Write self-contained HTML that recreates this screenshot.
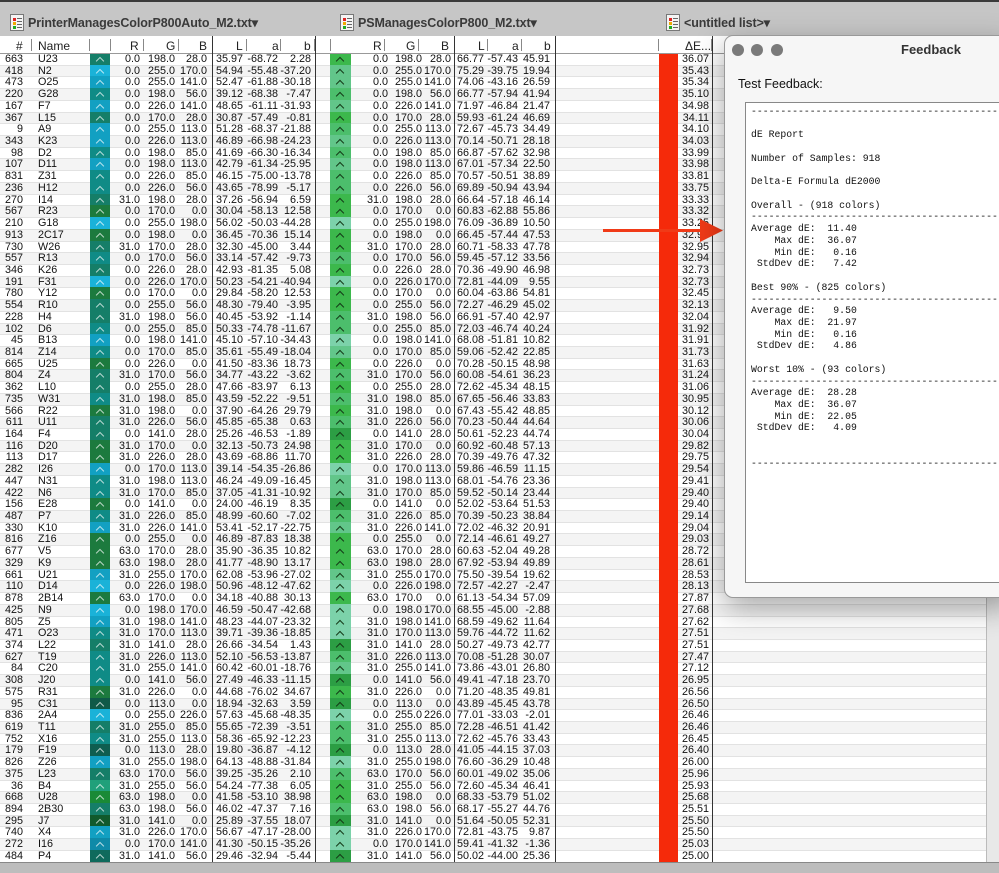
<!DOCTYPE html>
<html><head><meta charset="utf-8"><style>
*{margin:0;padding:0;box-sizing:border-box}
body{width:999px;height:873px;overflow:hidden;background:#c3c3c3;font-family:"Liberation Sans",sans-serif;position:relative;color:#111}
.top{position:absolute;left:0;top:0;width:999px;height:36px;background:#c6c6c6;border-top:2px solid #3a3a3a}
.tab{position:absolute;top:13px;font-size:12.5px;color:#3a3a3a;font-weight:bold;letter-spacing:-0.1px}
.ic{position:absolute;top:12px;width:14px;height:17px;background:#f4f4f4;border:1px solid #777}
.ic:before{content:"";position:absolute;left:2px;top:3px;width:3px;height:3px;background:#d22;box-shadow:0 4px 0 #ea0,0 8px 0 #2a2}
.ic:after{content:"";position:absolute;left:6px;top:3px;width:5px;height:1px;background:#666;box-shadow:0 3px 0 #666,0 6px 0 #666,0 9px 0 #666}
.hdr{position:absolute;left:0;top:36px;width:986px;height:18px;background:#fff;border-bottom:1px solid #999;font-size:12px;color:#222}
.hdr span{position:absolute;top:3px}
.tk{position:absolute;top:3px;width:1px;height:12px;background:#888}
.tbl{position:absolute;left:0;top:54px;width:986px;height:808px;overflow:hidden;background:#fff}
.r{position:relative;height:11.72px;border-bottom:1px solid #e2e2e2;font-size:10.8px;line-height:11px}
.r:nth-child(even){background:#f4f4f4}
.r b{position:absolute;top:0;font-weight:normal;text-align:right;white-space:nowrap}
.n{left:0;width:23px}.m{left:38px;text-align:left!important}
.c1{left:110px;width:30px}.c2{left:140px;width:35px}.c3{left:174px;width:33px}
.c4{left:212px;width:31px}.c5{left:244px;width:34px}.c6{left:278px;width:33px}
.d1{left:351px;width:37px}.d2{left:388px;width:34px}.d3{left:421px;width:30px}
.d4{left:455px;width:29px}.d5{left:484px;width:34px}.d6{left:518px;width:32px}
.e{left:678px;width:31px}
.r i{position:absolute;top:-1px;height:12.7px}
.r i:after{content:"";position:absolute;left:7px;top:5px;width:5px;height:5px;border-left:1px solid;border-top:1px solid;transform:rotate(45deg)}
.s1{left:90px;width:20px;color:rgba(255,255,255,.7)}
.s2{left:330px;width:21px;color:#153a18}
.k1{background:#1c7a3e}.k2{background:#157e68}.k3{background:#0f8b86}.k4{background:#12a0c2}.k5{background:#1ab2d8}
.g1{background:#3cb84c}.g2{background:#4cbe6c}.g3{background:#62c68a}.g4{background:#7cd2aa}.gd{background:#2c9e44}
.vl{position:absolute;top:36px;width:1px;height:826px;background:#333}
.red{position:absolute;left:659px;top:54px;width:19px;height:808px;background:#f52a0a}
.bot{position:absolute;left:0;top:862px;width:999px;height:11px;background:#bdbdbd;border-top:1px solid #888}
.rgt{position:absolute;left:986px;top:36px;width:13px;height:826px;background:#e8e8e8;border-left:1px solid #bbb}
.fb{position:absolute;left:724px;top:35px;width:290px;height:563px;background:#f6f6f6;border:1px solid #999;border-radius:9px;box-shadow:0 10px 30px rgba(0,0,0,.35)}
.dot{position:absolute;top:8px;width:12px;height:12px;border-radius:50%;background:#7a7a7a}
.ft{position:absolute;left:176px;top:6px;font-size:13px;font-weight:bold;color:#333}
.tf{position:absolute;left:13px;top:41px;font-size:12.5px;color:#111}
.box{position:absolute;left:20px;top:66px;width:270px;height:481px;background:#fff;border:1px solid #888;overflow:hidden}
.box pre{position:absolute;left:5px;top:3px;font-family:"Liberation Mono",monospace;font-size:9.8px;line-height:11.72px;color:#111}
</style></head><body>
<div class="top">
<div class="ic" style="left:10px"></div><div class="tab" style="left:28px">PrinterManagesColorP800Auto_M2.txt▾</div>
<div class="ic" style="left:340px"></div><div class="tab" style="left:358px">PSManagesColorP800_M2.txt▾</div>
<div class="ic" style="left:666px"></div><div class="tab" style="left:684px">&lt;untitled list&gt;▾</div>
</div>
<div class="hdr">
<span style="left:16px">#</span><div class="tk" style="left:31px"></div>
<span style="left:38px">Name</span><div class="tk" style="left:89px"></div><div class="tk" style="left:110px"></div>
<span style="left:130px">R</span><div class="tk" style="left:143px"></div>
<span style="left:166px">G</span><div class="tk" style="left:178px"></div>
<span style="left:199px">B</span>
<span style="left:236px">L</span><div class="tk" style="left:246px"></div>
<span style="left:272px">a</span><div class="tk" style="left:280px"></div>
<span style="left:304px">b</span><div class="tk" style="left:314px"></div><div class="tk" style="left:330px"></div>
<span style="left:373px">R</span><div class="tk" style="left:384px"></div>
<span style="left:406px">G</span><div class="tk" style="left:418px"></div>
<span style="left:441px">B</span>
<span style="left:478px">L</span><div class="tk" style="left:487px"></div>
<span style="left:512px">a</span><div class="tk" style="left:521px"></div>
<span style="left:544px">b</span>
<div class="tk" style="left:658px"></div><span style="left:685px">ΔE...</span><div class="tk" style="left:711px"></div>
</div>
<div class="tbl">
<div class="r"><b class="n">663</b><b class="m">U23</b><i class="s1 k2"></i><b class="c1">0.0</b><b class="c2">198.0</b><b class="c3">28.0</b><b class="c4">35.97</b><b class="c5">-68.72</b><b class="c6">2.28</b><i class="s2 g1"></i><b class="d1">0.0</b><b class="d2">198.0</b><b class="d3">28.0</b><b class="d4">66.77</b><b class="d5">-57.43</b><b class="d6">45.91</b><b class="e">36.07</b></div>
<div class="r"><b class="n">418</b><b class="m">N2</b><i class="s1 k5"></i><b class="c1">0.0</b><b class="c2">255.0</b><b class="c3">170.0</b><b class="c4">54.94</b><b class="c5">-55.48</b><b class="c6">-37.20</b><i class="s2 g3"></i><b class="d1">0.0</b><b class="d2">255.0</b><b class="d3">170.0</b><b class="d4">75.29</b><b class="d5">-39.75</b><b class="d6">19.94</b><b class="e">35.43</b></div>
<div class="r"><b class="n">473</b><b class="m">O25</b><i class="s1 k4"></i><b class="c1">0.0</b><b class="c2">255.0</b><b class="c3">141.0</b><b class="c4">52.47</b><b class="c5">-61.88</b><b class="c6">-30.18</b><i class="s2 g3"></i><b class="d1">0.0</b><b class="d2">255.0</b><b class="d3">141.0</b><b class="d4">74.06</b><b class="d5">-43.16</b><b class="d6">26.59</b><b class="e">35.34</b></div>
<div class="r"><b class="n">220</b><b class="m">G28</b><i class="s1 k3"></i><b class="c1">0.0</b><b class="c2">198.0</b><b class="c3">56.0</b><b class="c4">39.12</b><b class="c5">-68.38</b><b class="c6">-7.47</b><i class="s2 g2"></i><b class="d1">0.0</b><b class="d2">198.0</b><b class="d3">56.0</b><b class="d4">66.77</b><b class="d5">-57.94</b><b class="d6">41.94</b><b class="e">35.10</b></div>
<div class="r"><b class="n">167</b><b class="m">F7</b><i class="s1 k4"></i><b class="c1">0.0</b><b class="c2">226.0</b><b class="c3">141.0</b><b class="c4">48.65</b><b class="c5">-61.11</b><b class="c6">-31.93</b><i class="s2 g3"></i><b class="d1">0.0</b><b class="d2">226.0</b><b class="d3">141.0</b><b class="d4">71.97</b><b class="d5">-46.84</b><b class="d6">21.47</b><b class="e">34.98</b></div>
<div class="r"><b class="n">367</b><b class="m">L15</b><i class="s1 k2"></i><b class="c1">0.0</b><b class="c2">170.0</b><b class="c3">28.0</b><b class="c4">30.87</b><b class="c5">-57.49</b><b class="c6">-0.81</b><i class="s2 g1"></i><b class="d1">0.0</b><b class="d2">170.0</b><b class="d3">28.0</b><b class="d4">59.93</b><b class="d5">-61.24</b><b class="d6">46.69</b><b class="e">34.11</b></div>
<div class="r"><b class="n">9</b><b class="m">A9</b><i class="s1 k4"></i><b class="c1">0.0</b><b class="c2">255.0</b><b class="c3">113.0</b><b class="c4">51.28</b><b class="c5">-68.37</b><b class="c6">-21.88</b><i class="s2 g2"></i><b class="d1">0.0</b><b class="d2">255.0</b><b class="d3">113.0</b><b class="d4">72.67</b><b class="d5">-45.73</b><b class="d6">34.49</b><b class="e">34.10</b></div>
<div class="r"><b class="n">343</b><b class="m">K23</b><i class="s1 k4"></i><b class="c1">0.0</b><b class="c2">226.0</b><b class="c3">113.0</b><b class="c4">46.89</b><b class="c5">-66.98</b><b class="c6">-24.23</b><i class="s2 g3"></i><b class="d1">0.0</b><b class="d2">226.0</b><b class="d3">113.0</b><b class="d4">70.14</b><b class="d5">-50.71</b><b class="d6">28.18</b><b class="e">34.03</b></div>
<div class="r"><b class="n">98</b><b class="m">D2</b><i class="s1 k3"></i><b class="c1">0.0</b><b class="c2">198.0</b><b class="c3">85.0</b><b class="c4">41.69</b><b class="c5">-66.30</b><b class="c6">-16.34</b><i class="s2 g2"></i><b class="d1">0.0</b><b class="d2">198.0</b><b class="d3">85.0</b><b class="d4">66.87</b><b class="d5">-57.62</b><b class="d6">32.98</b><b class="e">33.99</b></div>
<div class="r"><b class="n">107</b><b class="m">D11</b><i class="s1 k4"></i><b class="c1">0.0</b><b class="c2">198.0</b><b class="c3">113.0</b><b class="c4">42.79</b><b class="c5">-61.34</b><b class="c6">-25.95</b><i class="s2 g3"></i><b class="d1">0.0</b><b class="d2">198.0</b><b class="d3">113.0</b><b class="d4">67.01</b><b class="d5">-57.34</b><b class="d6">22.50</b><b class="e">33.98</b></div>
<div class="r"><b class="n">831</b><b class="m">Z31</b><i class="s1 k3"></i><b class="c1">0.0</b><b class="c2">226.0</b><b class="c3">85.0</b><b class="c4">46.15</b><b class="c5">-75.00</b><b class="c6">-13.78</b><i class="s2 g2"></i><b class="d1">0.0</b><b class="d2">226.0</b><b class="d3">85.0</b><b class="d4">70.57</b><b class="d5">-50.51</b><b class="d6">38.89</b><b class="e">33.81</b></div>
<div class="r"><b class="n">236</b><b class="m">H12</b><i class="s1 k3"></i><b class="c1">0.0</b><b class="c2">226.0</b><b class="c3">56.0</b><b class="c4">43.65</b><b class="c5">-78.99</b><b class="c6">-5.17</b><i class="s2 g2"></i><b class="d1">0.0</b><b class="d2">226.0</b><b class="d3">56.0</b><b class="d4">69.89</b><b class="d5">-50.94</b><b class="d6">43.94</b><b class="e">33.75</b></div>
<div class="r"><b class="n">270</b><b class="m">I14</b><i class="s1 k2"></i><b class="c1">31.0</b><b class="c2">198.0</b><b class="c3">28.0</b><b class="c4">37.26</b><b class="c5">-56.94</b><b class="c6">6.59</b><i class="s2 g1"></i><b class="d1">31.0</b><b class="d2">198.0</b><b class="d3">28.0</b><b class="d4">66.64</b><b class="d5">-57.18</b><b class="d6">46.14</b><b class="e">33.33</b></div>
<div class="r"><b class="n">567</b><b class="m">R23</b><i class="s1 k1"></i><b class="c1">0.0</b><b class="c2">170.0</b><b class="c3">0.0</b><b class="c4">30.04</b><b class="c5">-58.13</b><b class="c6">12.58</b><i class="s2 g1"></i><b class="d1">0.0</b><b class="d2">170.0</b><b class="d3">0.0</b><b class="d4">60.83</b><b class="d5">-62.88</b><b class="d6">55.86</b><b class="e">33.32</b></div>
<div class="r"><b class="n">210</b><b class="m">G18</b><i class="s1 k5"></i><b class="c1">0.0</b><b class="c2">255.0</b><b class="c3">198.0</b><b class="c4">56.02</b><b class="c5">-50.03</b><b class="c6">-44.28</b><i class="s2 g4"></i><b class="d1">0.0</b><b class="d2">255.0</b><b class="d3">198.0</b><b class="d4">76.09</b><b class="d5">-36.89</b><b class="d6">10.50</b><b class="e">33.25</b></div>
<div class="r"><b class="n">913</b><b class="m">2C17</b><i class="s1 k1"></i><b class="c1">0.0</b><b class="c2">198.0</b><b class="c3">0.0</b><b class="c4">36.45</b><b class="c5">-70.36</b><b class="c6">15.14</b><i class="s2 g1"></i><b class="d1">0.0</b><b class="d2">198.0</b><b class="d3">0.0</b><b class="d4">66.45</b><b class="d5">-57.44</b><b class="d6">47.53</b><b class="e">32.96</b></div>
<div class="r"><b class="n">730</b><b class="m">W26</b><i class="s1 k2"></i><b class="c1">31.0</b><b class="c2">170.0</b><b class="c3">28.0</b><b class="c4">32.30</b><b class="c5">-45.00</b><b class="c6">3.44</b><i class="s2 g1"></i><b class="d1">31.0</b><b class="d2">170.0</b><b class="d3">28.0</b><b class="d4">60.71</b><b class="d5">-58.33</b><b class="d6">47.78</b><b class="e">32.95</b></div>
<div class="r"><b class="n">557</b><b class="m">R13</b><i class="s1 k3"></i><b class="c1">0.0</b><b class="c2">170.0</b><b class="c3">56.0</b><b class="c4">33.14</b><b class="c5">-57.42</b><b class="c6">-9.73</b><i class="s2 g2"></i><b class="d1">0.0</b><b class="d2">170.0</b><b class="d3">56.0</b><b class="d4">59.45</b><b class="d5">-57.12</b><b class="d6">33.56</b><b class="e">32.94</b></div>
<div class="r"><b class="n">346</b><b class="m">K26</b><i class="s1 k2"></i><b class="c1">0.0</b><b class="c2">226.0</b><b class="c3">28.0</b><b class="c4">42.93</b><b class="c5">-81.35</b><b class="c6">5.08</b><i class="s2 g1"></i><b class="d1">0.0</b><b class="d2">226.0</b><b class="d3">28.0</b><b class="d4">70.36</b><b class="d5">-49.90</b><b class="d6">46.98</b><b class="e">32.73</b></div>
<div class="r"><b class="n">191</b><b class="m">F31</b><i class="s1 k5"></i><b class="c1">0.0</b><b class="c2">226.0</b><b class="c3">170.0</b><b class="c4">50.23</b><b class="c5">-54.21</b><b class="c6">-40.94</b><i class="s2 g4"></i><b class="d1">0.0</b><b class="d2">226.0</b><b class="d3">170.0</b><b class="d4">72.81</b><b class="d5">-44.09</b><b class="d6">9.55</b><b class="e">32.73</b></div>
<div class="r"><b class="n">780</b><b class="m">Y12</b><i class="s1 k1"></i><b class="c1">0.0</b><b class="c2">170.0</b><b class="c3">0.0</b><b class="c4">29.84</b><b class="c5">-58.20</b><b class="c6">12.53</b><i class="s2 g1"></i><b class="d1">0.0</b><b class="d2">170.0</b><b class="d3">0.0</b><b class="d4">60.04</b><b class="d5">-63.86</b><b class="d6">54.81</b><b class="e">32.45</b></div>
<div class="r"><b class="n">554</b><b class="m">R10</b><i class="s1 k2"></i><b class="c1">0.0</b><b class="c2">255.0</b><b class="c3">56.0</b><b class="c4">48.30</b><b class="c5">-79.40</b><b class="c6">-3.95</b><i class="s2 g1"></i><b class="d1">0.0</b><b class="d2">255.0</b><b class="d3">56.0</b><b class="d4">72.27</b><b class="d5">-46.29</b><b class="d6">45.02</b><b class="e">32.13</b></div>
<div class="r"><b class="n">228</b><b class="m">H4</b><i class="s1 k2"></i><b class="c1">31.0</b><b class="c2">198.0</b><b class="c3">56.0</b><b class="c4">40.45</b><b class="c5">-53.92</b><b class="c6">-1.14</b><i class="s2 g2"></i><b class="d1">31.0</b><b class="d2">198.0</b><b class="d3">56.0</b><b class="d4">66.91</b><b class="d5">-57.40</b><b class="d6">42.97</b><b class="e">32.04</b></div>
<div class="r"><b class="n">102</b><b class="m">D6</b><i class="s1 k3"></i><b class="c1">0.0</b><b class="c2">255.0</b><b class="c3">85.0</b><b class="c4">50.33</b><b class="c5">-74.78</b><b class="c6">-11.67</b><i class="s2 g2"></i><b class="d1">0.0</b><b class="d2">255.0</b><b class="d3">85.0</b><b class="d4">72.03</b><b class="d5">-46.74</b><b class="d6">40.24</b><b class="e">31.92</b></div>
<div class="r"><b class="n">45</b><b class="m">B13</b><i class="s1 k4"></i><b class="c1">0.0</b><b class="c2">198.0</b><b class="c3">141.0</b><b class="c4">45.10</b><b class="c5">-57.10</b><b class="c6">-34.43</b><i class="s2 g4"></i><b class="d1">0.0</b><b class="d2">198.0</b><b class="d3">141.0</b><b class="d4">68.08</b><b class="d5">-51.81</b><b class="d6">10.82</b><b class="e">31.91</b></div>
<div class="r"><b class="n">814</b><b class="m">Z14</b><i class="s1 k3"></i><b class="c1">0.0</b><b class="c2">170.0</b><b class="c3">85.0</b><b class="c4">35.61</b><b class="c5">-55.49</b><b class="c6">-18.04</b><i class="s2 g3"></i><b class="d1">0.0</b><b class="d2">170.0</b><b class="d3">85.0</b><b class="d4">59.06</b><b class="d5">-52.42</b><b class="d6">22.85</b><b class="e">31.73</b></div>
<div class="r"><b class="n">665</b><b class="m">U25</b><i class="s1 k1"></i><b class="c1">0.0</b><b class="c2">226.0</b><b class="c3">0.0</b><b class="c4">41.50</b><b class="c5">-83.36</b><b class="c6">18.73</b><i class="s2 g1"></i><b class="d1">0.0</b><b class="d2">226.0</b><b class="d3">0.0</b><b class="d4">70.28</b><b class="d5">-50.15</b><b class="d6">48.98</b><b class="e">31.63</b></div>
<div class="r"><b class="n">804</b><b class="m">Z4</b><i class="s1 k2"></i><b class="c1">31.0</b><b class="c2">170.0</b><b class="c3">56.0</b><b class="c4">34.77</b><b class="c5">-43.22</b><b class="c6">-3.62</b><i class="s2 g2"></i><b class="d1">31.0</b><b class="d2">170.0</b><b class="d3">56.0</b><b class="d4">60.08</b><b class="d5">-54.61</b><b class="d6">36.23</b><b class="e">31.24</b></div>
<div class="r"><b class="n">362</b><b class="m">L10</b><i class="s1 k2"></i><b class="c1">0.0</b><b class="c2">255.0</b><b class="c3">28.0</b><b class="c4">47.66</b><b class="c5">-83.97</b><b class="c6">6.13</b><i class="s2 g1"></i><b class="d1">0.0</b><b class="d2">255.0</b><b class="d3">28.0</b><b class="d4">72.62</b><b class="d5">-45.34</b><b class="d6">48.15</b><b class="e">31.06</b></div>
<div class="r"><b class="n">735</b><b class="m">W31</b><i class="s1 k3"></i><b class="c1">31.0</b><b class="c2">198.0</b><b class="c3">85.0</b><b class="c4">43.59</b><b class="c5">-52.22</b><b class="c6">-9.51</b><i class="s2 g2"></i><b class="d1">31.0</b><b class="d2">198.0</b><b class="d3">85.0</b><b class="d4">67.65</b><b class="d5">-56.46</b><b class="d6">33.83</b><b class="e">30.95</b></div>
<div class="r"><b class="n">566</b><b class="m">R22</b><i class="s1 k1"></i><b class="c1">31.0</b><b class="c2">198.0</b><b class="c3">0.0</b><b class="c4">37.90</b><b class="c5">-64.26</b><b class="c6">29.79</b><i class="s2 g1"></i><b class="d1">31.0</b><b class="d2">198.0</b><b class="d3">0.0</b><b class="d4">67.43</b><b class="d5">-55.42</b><b class="d6">48.85</b><b class="e">30.12</b></div>
<div class="r"><b class="n">611</b><b class="m">U11</b><i class="s1 k2"></i><b class="c1">31.0</b><b class="c2">226.0</b><b class="c3">56.0</b><b class="c4">45.85</b><b class="c5">-65.38</b><b class="c6">0.63</b><i class="s2 g2"></i><b class="d1">31.0</b><b class="d2">226.0</b><b class="d3">56.0</b><b class="d4">70.23</b><b class="d5">-50.44</b><b class="d6">44.64</b><b class="e">30.06</b></div>
<div class="r"><b class="n">164</b><b class="m">F4</b><i class="s1 k2"></i><b class="c1">0.0</b><b class="c2">141.0</b><b class="c3">28.0</b><b class="c4">25.26</b><b class="c5">-46.53</b><b class="c6">-1.89</b><i class="s2 gd"></i><b class="d1">0.0</b><b class="d2">141.0</b><b class="d3">28.0</b><b class="d4">50.61</b><b class="d5">-52.23</b><b class="d6">44.74</b><b class="e">30.04</b></div>
<div class="r"><b class="n">116</b><b class="m">D20</b><i class="s1 k1"></i><b class="c1">31.0</b><b class="c2">170.0</b><b class="c3">0.0</b><b class="c4">32.13</b><b class="c5">-50.73</b><b class="c6">24.98</b><i class="s2 g1"></i><b class="d1">31.0</b><b class="d2">170.0</b><b class="d3">0.0</b><b class="d4">60.92</b><b class="d5">-60.48</b><b class="d6">57.13</b><b class="e">29.82</b></div>
<div class="r"><b class="n">113</b><b class="m">D17</b><i class="s1 k1"></i><b class="c1">31.0</b><b class="c2">226.0</b><b class="c3">28.0</b><b class="c4">43.69</b><b class="c5">-68.86</b><b class="c6">11.70</b><i class="s2 g1"></i><b class="d1">31.0</b><b class="d2">226.0</b><b class="d3">28.0</b><b class="d4">70.39</b><b class="d5">-49.76</b><b class="d6">47.32</b><b class="e">29.75</b></div>
<div class="r"><b class="n">282</b><b class="m">I26</b><i class="s1 k4"></i><b class="c1">0.0</b><b class="c2">170.0</b><b class="c3">113.0</b><b class="c4">39.14</b><b class="c5">-54.35</b><b class="c6">-26.86</b><i class="s2 g4"></i><b class="d1">0.0</b><b class="d2">170.0</b><b class="d3">113.0</b><b class="d4">59.86</b><b class="d5">-46.59</b><b class="d6">11.15</b><b class="e">29.54</b></div>
<div class="r"><b class="n">447</b><b class="m">N31</b><i class="s1 k3"></i><b class="c1">31.0</b><b class="c2">198.0</b><b class="c3">113.0</b><b class="c4">46.24</b><b class="c5">-49.09</b><b class="c6">-16.45</b><i class="s2 g3"></i><b class="d1">31.0</b><b class="d2">198.0</b><b class="d3">113.0</b><b class="d4">68.01</b><b class="d5">-54.76</b><b class="d6">23.36</b><b class="e">29.41</b></div>
<div class="r"><b class="n">422</b><b class="m">N6</b><i class="s1 k3"></i><b class="c1">31.0</b><b class="c2">170.0</b><b class="c3">85.0</b><b class="c4">37.05</b><b class="c5">-41.31</b><b class="c6">-10.92</b><i class="s2 g3"></i><b class="d1">31.0</b><b class="d2">170.0</b><b class="d3">85.0</b><b class="d4">59.52</b><b class="d5">-50.14</b><b class="d6">23.44</b><b class="e">29.40</b></div>
<div class="r"><b class="n">156</b><b class="m">E28</b><i class="s1 k1"></i><b class="c1">0.0</b><b class="c2">141.0</b><b class="c3">0.0</b><b class="c4">24.00</b><b class="c5">-46.19</b><b class="c6">8.35</b><i class="s2 gd"></i><b class="d1">0.0</b><b class="d2">141.0</b><b class="d3">0.0</b><b class="d4">52.02</b><b class="d5">-53.64</b><b class="d6">51.53</b><b class="e">29.40</b></div>
<div class="r"><b class="n">487</b><b class="m">P7</b><i class="s1 k3"></i><b class="c1">31.0</b><b class="c2">226.0</b><b class="c3">85.0</b><b class="c4">48.99</b><b class="c5">-60.60</b><b class="c6">-7.02</b><i class="s2 g2"></i><b class="d1">31.0</b><b class="d2">226.0</b><b class="d3">85.0</b><b class="d4">70.39</b><b class="d5">-50.23</b><b class="d6">38.84</b><b class="e">29.14</b></div>
<div class="r"><b class="n">330</b><b class="m">K10</b><i class="s1 k4"></i><b class="c1">31.0</b><b class="c2">226.0</b><b class="c3">141.0</b><b class="c4">53.41</b><b class="c5">-52.17</b><b class="c6">-22.75</b><i class="s2 g3"></i><b class="d1">31.0</b><b class="d2">226.0</b><b class="d3">141.0</b><b class="d4">72.02</b><b class="d5">-46.32</b><b class="d6">20.91</b><b class="e">29.04</b></div>
<div class="r"><b class="n">816</b><b class="m">Z16</b><i class="s1 k1"></i><b class="c1">0.0</b><b class="c2">255.0</b><b class="c3">0.0</b><b class="c4">46.89</b><b class="c5">-87.83</b><b class="c6">18.38</b><i class="s2 g1"></i><b class="d1">0.0</b><b class="d2">255.0</b><b class="d3">0.0</b><b class="d4">72.14</b><b class="d5">-46.61</b><b class="d6">49.27</b><b class="e">29.03</b></div>
<div class="r"><b class="n">677</b><b class="m">V5</b><i class="s1 k1"></i><b class="c1">63.0</b><b class="c2">170.0</b><b class="c3">28.0</b><b class="c4">35.90</b><b class="c5">-36.35</b><b class="c6">10.82</b><i class="s2 g1"></i><b class="d1">63.0</b><b class="d2">170.0</b><b class="d3">28.0</b><b class="d4">60.63</b><b class="d5">-52.04</b><b class="d6">49.28</b><b class="e">28.72</b></div>
<div class="r"><b class="n">329</b><b class="m">K9</b><i class="s1 k1"></i><b class="c1">63.0</b><b class="c2">198.0</b><b class="c3">28.0</b><b class="c4">41.77</b><b class="c5">-48.90</b><b class="c6">13.17</b><i class="s2 g1"></i><b class="d1">63.0</b><b class="d2">198.0</b><b class="d3">28.0</b><b class="d4">67.92</b><b class="d5">-53.94</b><b class="d6">49.89</b><b class="e">28.61</b></div>
<div class="r"><b class="n">661</b><b class="m">U21</b><i class="s1 k4"></i><b class="c1">31.0</b><b class="c2">255.0</b><b class="c3">170.0</b><b class="c4">62.08</b><b class="c5">-53.96</b><b class="c6">-27.02</b><i class="s2 g3"></i><b class="d1">31.0</b><b class="d2">255.0</b><b class="d3">170.0</b><b class="d4">75.50</b><b class="d5">-39.54</b><b class="d6">19.62</b><b class="e">28.53</b></div>
<div class="r"><b class="n">110</b><b class="m">D14</b><i class="s1 k5"></i><b class="c1">0.0</b><b class="c2">226.0</b><b class="c3">198.0</b><b class="c4">50.96</b><b class="c5">-48.12</b><b class="c6">-47.62</b><i class="s2 g4"></i><b class="d1">0.0</b><b class="d2">226.0</b><b class="d3">198.0</b><b class="d4">72.57</b><b class="d5">-42.27</b><b class="d6">-2.47</b><b class="e">28.13</b></div>
<div class="r"><b class="n">878</b><b class="m">2B14</b><i class="s1 k1"></i><b class="c1">63.0</b><b class="c2">170.0</b><b class="c3">0.0</b><b class="c4">34.18</b><b class="c5">-40.88</b><b class="c6">30.13</b><i class="s2 g1"></i><b class="d1">63.0</b><b class="d2">170.0</b><b class="d3">0.0</b><b class="d4">61.13</b><b class="d5">-54.34</b><b class="d6">57.09</b><b class="e">27.87</b></div>
<div class="r"><b class="n">425</b><b class="m">N9</b><i class="s1 k5"></i><b class="c1">0.0</b><b class="c2">198.0</b><b class="c3">170.0</b><b class="c4">46.59</b><b class="c5">-50.47</b><b class="c6">-42.68</b><i class="s2 g4"></i><b class="d1">0.0</b><b class="d2">198.0</b><b class="d3">170.0</b><b class="d4">68.55</b><b class="d5">-45.00</b><b class="d6">-2.88</b><b class="e">27.68</b></div>
<div class="r"><b class="n">805</b><b class="m">Z5</b><i class="s1 k4"></i><b class="c1">31.0</b><b class="c2">198.0</b><b class="c3">141.0</b><b class="c4">48.23</b><b class="c5">-44.07</b><b class="c6">-23.32</b><i class="s2 g4"></i><b class="d1">31.0</b><b class="d2">198.0</b><b class="d3">141.0</b><b class="d4">68.59</b><b class="d5">-49.62</b><b class="d6">11.64</b><b class="e">27.62</b></div>
<div class="r"><b class="n">471</b><b class="m">O23</b><i class="s1 k3"></i><b class="c1">31.0</b><b class="c2">170.0</b><b class="c3">113.0</b><b class="c4">39.71</b><b class="c5">-39.36</b><b class="c6">-18.85</b><i class="s2 g4"></i><b class="d1">31.0</b><b class="d2">170.0</b><b class="d3">113.0</b><b class="d4">59.76</b><b class="d5">-44.72</b><b class="d6">11.62</b><b class="e">27.51</b></div>
<div class="r"><b class="n">374</b><b class="m">L22</b><i class="s1 k2"></i><b class="c1">31.0</b><b class="c2">141.0</b><b class="c3">28.0</b><b class="c4">26.66</b><b class="c5">-34.54</b><b class="c6">1.43</b><i class="s2 gd"></i><b class="d1">31.0</b><b class="d2">141.0</b><b class="d3">28.0</b><b class="d4">50.27</b><b class="d5">-49.73</b><b class="d6">42.77</b><b class="e">27.51</b></div>
<div class="r"><b class="n">627</b><b class="m">T19</b><i class="s1 k3"></i><b class="c1">31.0</b><b class="c2">226.0</b><b class="c3">113.0</b><b class="c4">52.10</b><b class="c5">-56.53</b><b class="c6">-13.87</b><i class="s2 g2"></i><b class="d1">31.0</b><b class="d2">226.0</b><b class="d3">113.0</b><b class="d4">70.08</b><b class="d5">-51.28</b><b class="d6">30.07</b><b class="e">27.47</b></div>
<div class="r"><b class="n">84</b><b class="m">C20</b><i class="s1 k3"></i><b class="c1">31.0</b><b class="c2">255.0</b><b class="c3">141.0</b><b class="c4">60.42</b><b class="c5">-60.01</b><b class="c6">-18.76</b><i class="s2 g3"></i><b class="d1">31.0</b><b class="d2">255.0</b><b class="d3">141.0</b><b class="d4">73.86</b><b class="d5">-43.01</b><b class="d6">26.80</b><b class="e">27.12</b></div>
<div class="r"><b class="n">308</b><b class="m">J20</b><i class="s1 k3"></i><b class="c1">0.0</b><b class="c2">141.0</b><b class="c3">56.0</b><b class="c4">27.49</b><b class="c5">-46.33</b><b class="c6">-11.15</b><i class="s2 gd"></i><b class="d1">0.0</b><b class="d2">141.0</b><b class="d3">56.0</b><b class="d4">49.41</b><b class="d5">-47.18</b><b class="d6">23.70</b><b class="e">26.95</b></div>
<div class="r"><b class="n">575</b><b class="m">R31</b><i class="s1 k1"></i><b class="c1">31.0</b><b class="c2">226.0</b><b class="c3">0.0</b><b class="c4">44.68</b><b class="c5">-76.02</b><b class="c6">34.67</b><i class="s2 g1"></i><b class="d1">31.0</b><b class="d2">226.0</b><b class="d3">0.0</b><b class="d4">71.20</b><b class="d5">-48.35</b><b class="d6">49.81</b><b class="e">26.56</b></div>
<div class="r"><b class="n">95</b><b class="m">C31</b><i class="s1 k2" style="background:#0f5a48"></i><b class="c1">0.0</b><b class="c2">113.0</b><b class="c3">0.0</b><b class="c4">18.94</b><b class="c5">-32.63</b><b class="c6">3.59</b><i class="s2 gd"></i><b class="d1">0.0</b><b class="d2">113.0</b><b class="d3">0.0</b><b class="d4">43.89</b><b class="d5">-45.45</b><b class="d6">43.78</b><b class="e">26.50</b></div>
<div class="r"><b class="n">836</b><b class="m">2A4</b><i class="s1 k5"></i><b class="c1">0.0</b><b class="c2">255.0</b><b class="c3">226.0</b><b class="c4">57.63</b><b class="c5">-45.68</b><b class="c6">-48.35</b><i class="s2 g4"></i><b class="d1">0.0</b><b class="d2">255.0</b><b class="d3">226.0</b><b class="d4">77.01</b><b class="d5">-33.03</b><b class="d6">-2.01</b><b class="e">26.46</b></div>
<div class="r"><b class="n">619</b><b class="m">T11</b><i class="s1 k2"></i><b class="c1">31.0</b><b class="c2">255.0</b><b class="c3">85.0</b><b class="c4">55.65</b><b class="c5">-72.39</b><b class="c6">-3.51</b><i class="s2 g2"></i><b class="d1">31.0</b><b class="d2">255.0</b><b class="d3">85.0</b><b class="d4">72.28</b><b class="d5">-46.51</b><b class="d6">41.42</b><b class="e">26.46</b></div>
<div class="r"><b class="n">752</b><b class="m">X16</b><i class="s1 k3"></i><b class="c1">31.0</b><b class="c2">255.0</b><b class="c3">113.0</b><b class="c4">58.36</b><b class="c5">-65.92</b><b class="c6">-12.23</b><i class="s2 g2"></i><b class="d1">31.0</b><b class="d2">255.0</b><b class="d3">113.0</b><b class="d4">72.62</b><b class="d5">-45.76</b><b class="d6">33.43</b><b class="e">26.45</b></div>
<div class="r"><b class="n">179</b><b class="m">F19</b><i class="s1 k2" style="background:#0f5e50"></i><b class="c1">0.0</b><b class="c2">113.0</b><b class="c3">28.0</b><b class="c4">19.80</b><b class="c5">-36.87</b><b class="c6">-4.12</b><i class="s2 gd"></i><b class="d1">0.0</b><b class="d2">113.0</b><b class="d3">28.0</b><b class="d4">41.05</b><b class="d5">-44.15</b><b class="d6">37.03</b><b class="e">26.40</b></div>
<div class="r"><b class="n">826</b><b class="m">Z26</b><i class="s1 k4"></i><b class="c1">31.0</b><b class="c2">255.0</b><b class="c3">198.0</b><b class="c4">64.13</b><b class="c5">-48.88</b><b class="c6">-31.84</b><i class="s2 g4"></i><b class="d1">31.0</b><b class="d2">255.0</b><b class="d3">198.0</b><b class="d4">76.60</b><b class="d5">-36.29</b><b class="d6">10.48</b><b class="e">26.00</b></div>
<div class="r"><b class="n">375</b><b class="m">L23</b><i class="s1 k2"></i><b class="c1">63.0</b><b class="c2">170.0</b><b class="c3">56.0</b><b class="c4">39.25</b><b class="c5">-35.26</b><b class="c6">2.10</b><i class="s2 g2"></i><b class="d1">63.0</b><b class="d2">170.0</b><b class="d3">56.0</b><b class="d4">60.01</b><b class="d5">-49.02</b><b class="d6">35.06</b><b class="e">25.96</b></div>
<div class="r"><b class="n">36</b><b class="m">B4</b><i class="s1 k2" style="background:#20a07a"></i><b class="c1">31.0</b><b class="c2">255.0</b><b class="c3">56.0</b><b class="c4">54.24</b><b class="c5">-77.38</b><b class="c6">6.05</b><i class="s2 g1"></i><b class="d1">31.0</b><b class="d2">255.0</b><b class="d3">56.0</b><b class="d4">72.60</b><b class="d5">-45.34</b><b class="d6">46.41</b><b class="e">25.93</b></div>
<div class="r"><b class="n">668</b><b class="m">U28</b><i class="s1 k1" style="background:#1a8a36"></i><b class="c1">63.0</b><b class="c2">198.0</b><b class="c3">0.0</b><b class="c4">41.58</b><b class="c5">-53.10</b><b class="c6">38.98</b><i class="s2 g1"></i><b class="d1">63.0</b><b class="d2">198.0</b><b class="d3">0.0</b><b class="d4">68.33</b><b class="d5">-53.79</b><b class="d6">51.02</b><b class="e">25.68</b></div>
<div class="r"><b class="n">894</b><b class="m">2B30</b><i class="s1 k2"></i><b class="c1">63.0</b><b class="c2">198.0</b><b class="c3">56.0</b><b class="c4">46.02</b><b class="c5">-47.37</b><b class="c6">7.16</b><i class="s2 g2"></i><b class="d1">63.0</b><b class="d2">198.0</b><b class="d3">56.0</b><b class="d4">68.17</b><b class="d5">-55.27</b><b class="d6">44.76</b><b class="e">25.51</b></div>
<div class="r"><b class="n">295</b><b class="m">J7</b><i class="s1 k1" style="background:#115a2c"></i><b class="c1">31.0</b><b class="c2">141.0</b><b class="c3">0.0</b><b class="c4">25.89</b><b class="c5">-37.55</b><b class="c6">18.07</b><i class="s2 gd"></i><b class="d1">31.0</b><b class="d2">141.0</b><b class="d3">0.0</b><b class="d4">51.64</b><b class="d5">-50.05</b><b class="d6">52.31</b><b class="e">25.50</b></div>
<div class="r"><b class="n">740</b><b class="m">X4</b><i class="s1 k4"></i><b class="c1">31.0</b><b class="c2">226.0</b><b class="c3">170.0</b><b class="c4">56.67</b><b class="c5">-47.17</b><b class="c6">-28.00</b><i class="s2 g4"></i><b class="d1">31.0</b><b class="d2">226.0</b><b class="d3">170.0</b><b class="d4">72.81</b><b class="d5">-43.75</b><b class="d6">9.87</b><b class="e">25.50</b></div>
<div class="r"><b class="n">272</b><b class="m">I16</b><i class="s1 k4" style="background:#0f8aa8"></i><b class="c1">0.0</b><b class="c2">170.0</b><b class="c3">141.0</b><b class="c4">41.30</b><b class="c5">-50.15</b><b class="c6">-35.26</b><i class="s2 g4"></i><b class="d1">0.0</b><b class="d2">170.0</b><b class="d3">141.0</b><b class="d4">59.41</b><b class="d5">-41.32</b><b class="d6">-1.36</b><b class="e">25.03</b></div>
<div class="r"><b class="n">484</b><b class="m">P4</b><i class="s1 k3" style="background:#0f6a5c"></i><b class="c1">31.0</b><b class="c2">141.0</b><b class="c3">56.0</b><b class="c4">29.46</b><b class="c5">-32.94</b><b class="c6">-5.44</b><i class="s2 gd"></i><b class="d1">31.0</b><b class="d2">141.0</b><b class="d3">56.0</b><b class="d4">50.02</b><b class="d5">-44.00</b><b class="d6">25.36</b><b class="e">25.00</b></div>
</div>
<div class="red"></div>
<div class="vl" style="left:212px"></div><div class="vl" style="left:315px"></div>
<div class="vl" style="left:454px"></div><div class="vl" style="left:555px"></div>
<div class="vl" style="left:712px"></div>
<div class="rgt"></div>
<div class="bot"></div>
<svg style="position:absolute;left:600px;top:218px" width="125" height="26"><rect x="3" y="11" width="98" height="3" fill="#f03a17"/><polygon points="100,1 123,12.5 100,24" fill="#f03a17"/></svg>
<div class="fb">
<div class="dot" style="left:7px"></div><div class="dot" style="left:26px"></div><div class="dot" style="left:46px"></div>
<div class="ft">Feedback</div>
<div class="tf">Test Feedback:</div>
<div class="box"><pre>----------------------------------------------

dE Report

Number of Samples: 918

Delta-E Formula dE2000

Overall - (918 colors)
----------------------------------------------
Average dE:  11.40
    Max dE:  36.07
    Min dE:   0.16
 StdDev dE:   7.42

Best 90% - (825 colors)
----------------------------------------------
Average dE:   9.50
    Max dE:  21.97
    Min dE:   0.16
 StdDev dE:   4.86

Worst 10% - (93 colors)
----------------------------------------------
Average dE:  28.28
    Max dE:  36.07
    Min dE:  22.05
 StdDev dE:   4.09


----------------------------------------------</pre></div>
</div>
</body></html>
